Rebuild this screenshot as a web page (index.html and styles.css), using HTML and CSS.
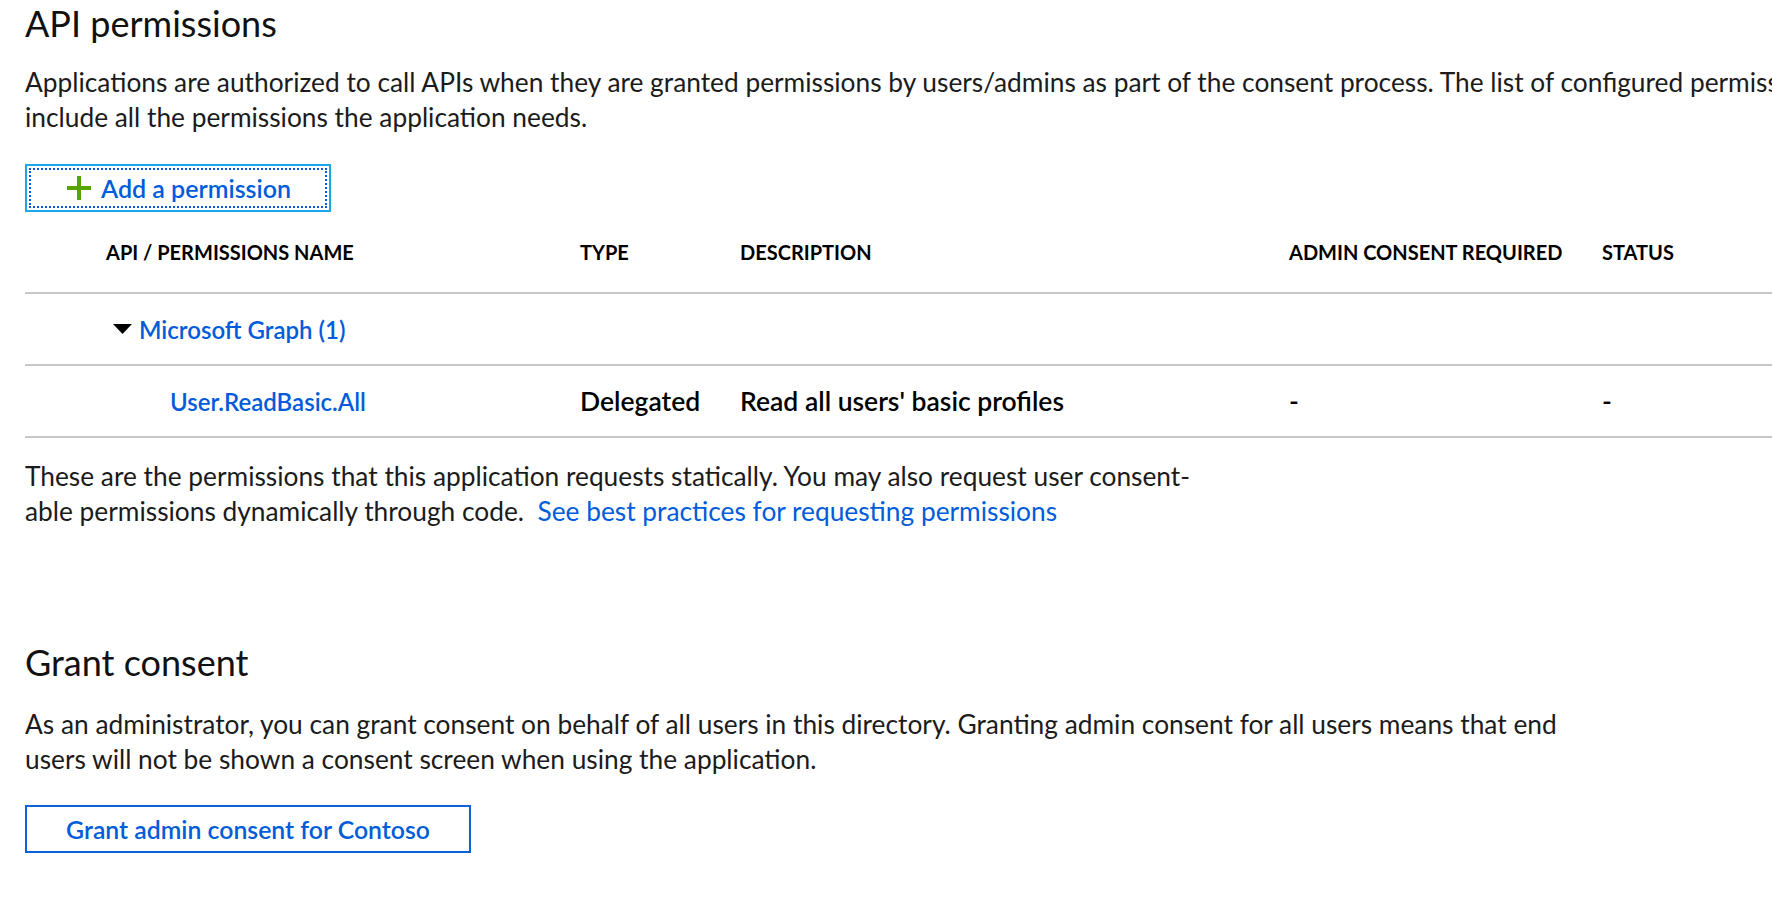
FILE: index.html
```html
<!DOCTYPE html>
<html lang="en">
<head>
<meta charset="utf-8">
<title>API permissions</title>
<link rel="stylesheet" href="styles.css">
</head>
<body>
<main class="page">
  <h1 class="title">API permissions</h1>
  <p class="intro">Applications are authorized to call APIs when they are granted permissions by users/admins as part of the consent process. The list of configured permissions should<br>include all the permissions the application needs.</p>
  <button class="add-btn" type="button">
    <svg class="plus" width="24" height="24" viewBox="0 0 24 24" aria-hidden="true"><rect x="10" y="0" width="4" height="24"/><rect x="0" y="10" width="24" height="4"/></svg>
    <span>Add a permission</span>
  </button>

  <div class="grid">
    <div class="row head">
      <div class="cell c-name">API / PERMISSIONS NAME</div>
      <div class="cell">TYPE</div>
      <div class="cell">DESCRIPTION</div>
      <div class="cell">ADMIN CONSENT REQUIRED</div>
      <div class="cell">STATUS</div>
    </div>
    <div class="row group">
      <div class="cell c-group">
        <svg class="caret" width="19" height="10" viewBox="0 0 19 10" aria-hidden="true"><polygon points="0,0 19,0 9.5,10"/></svg>
        <a class="link" href="#">Microsoft Graph (1)</a>
      </div>
      <div class="cell"></div>
      <div class="cell"></div>
      <div class="cell"></div>
      <div class="cell"></div>
    </div>
    <div class="row item">
      <div class="cell c-perm"><a class="link" href="#">User.ReadBasic.All</a></div>
      <div class="cell">Delegated</div>
      <div class="cell">Read all users' basic profiles</div>
      <div class="cell">-</div>
      <div class="cell">-</div>
    </div>
  </div>

  <p class="note">These are the permissions that this application requests statically. You may also request user consent-<br>able permissions dynamically through code.&nbsp; <a class="plain-link" href="#">See best practices for requesting permissions</a></p>

  <h2 class="title section">Grant consent</h2>
  <p class="note grant-text">As an administrator, you can grant consent on behalf of all users in this directory. Granting admin consent for all users means that end<br>users will not be shown a consent screen when using the application.</p>
  <button class="grant-btn" type="button">Grant admin consent for Contoso</button>
</main>
</body>
</html>
```
FILE: styles.css
```css
html, body {
  margin: 0;
  padding: 0;
  background: #ffffff;
}

body {
  width: 1772px;
  height: 908px;
  overflow: hidden;
  font-family: "Lato", "Liberation Sans", sans-serif;
  color: #1b1b1b;
}

.page {
  display: flex;
  flex-direction: column;
  align-items: flex-start;
  padding: 3px 0 0 25px;
  width: 2200px;
}

.title {
  margin: 0;
  font-size: 36px;
  font-weight: 400;
  line-height: 40px;
  color: #111;
}

.intro {
  margin: 22px 0 0;
  font-size: 26.3px;
  line-height: 35px;
  white-space: nowrap;
}

.add-btn {
  position: relative;
  margin-top: 29px;
  width: 306px;
  height: 48px;
  padding: 0 0 0 40px;
  display: flex;
  align-items: center;
  gap: 10px;
  background: #fff;
  border: 2px solid #1ba6e8;
  font-family: inherit;
  font-size: 25px;
  font-weight: 600;
  color: #015cda;
  cursor: pointer;
}

.add-btn::after {
  content: "";
  position: absolute;
  inset: 2px;
  border: 2px dotted #0a5bd3;
  pointer-events: none;
}

.plus {
  fill: #57a300;
  flex: none;
}

.grid {
  width: 1747px;
  display: flex;
  flex-direction: column;
}

.row {
  display: grid;
  grid-template-columns: 555px 160px 549px 313px 1fr;
  align-items: center;
  border-bottom: 2px solid #c8c8c8;
}

.row.head {
  height: 80px;
  font-size: 20px;
  font-weight: 700;
  color: #000;
}

.row.group,
.row.item {
  height: 70px;
}

.row.item {
  font-size: 26.5px;
  font-weight: 600;
  color: #000;
}

.cell {
  white-space: nowrap;
}

.c-name {
  padding-left: 81px;
}

.c-group {
  padding-left: 88px;
  display: flex;
  align-items: center;
  gap: 7px;
}

.caret {
  fill: #000;
}

.c-perm {
  padding-left: 145px;
}

.link {
  font-size: 24px;
  font-weight: 600;
  color: #015cda;
  text-decoration: none;
}

.note {
  margin: 21px 0 0;
  font-size: 26.3px;
  line-height: 35px;
  white-space: nowrap;
}

.plain-link {
  color: #015cda;
  text-decoration: none;
}

.section {
  margin-top: 113px;
}

.grant-text {
  margin-top: 25px;
}

.grant-btn {
  margin-top: 28px;
  width: 446px;
  height: 48px;
  background: #fff;
  border: 2px solid #0b62d6;
  font-family: inherit;
  font-size: 24.8px;
  font-weight: 600;
  color: #015cda;
  cursor: pointer;
}
```
